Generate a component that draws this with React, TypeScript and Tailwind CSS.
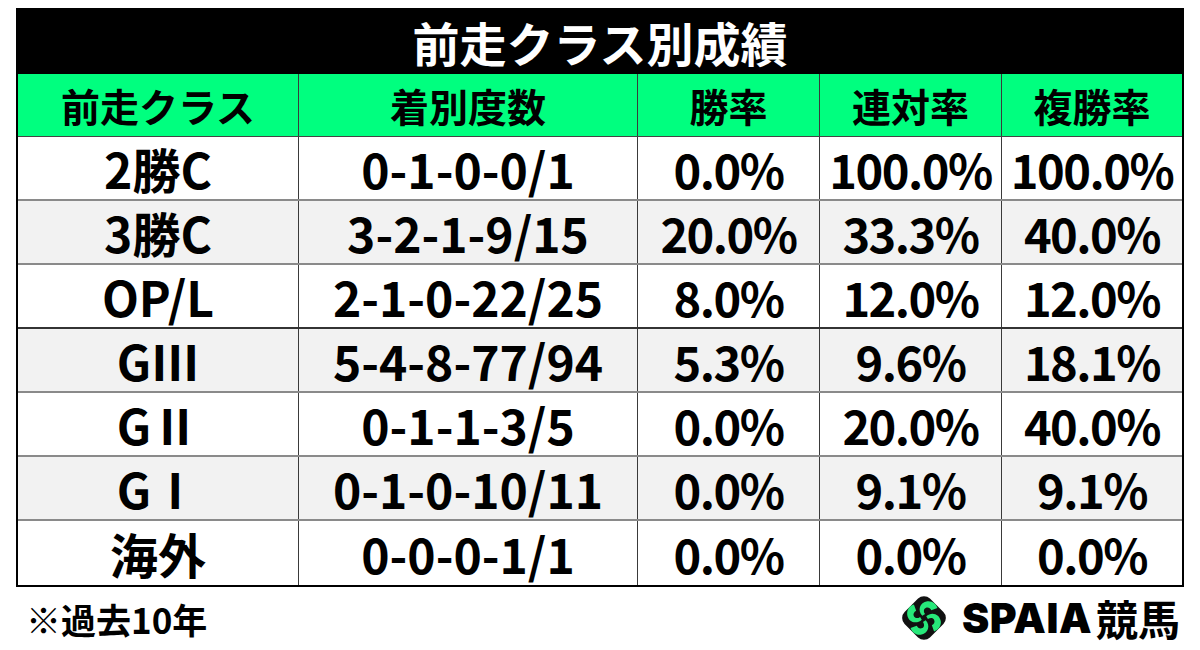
import React from 'react';

const rows = [
  { cls: '2勝C', rec: '0-1-0-0/1', win: '0.0%', ren: '100.0%', fuku: '100.0%' },
  { cls: '3勝C', rec: '3-2-1-9/15', win: '20.0%', ren: '33.3%', fuku: '40.0%' },
  { cls: 'OP/L', rec: '2-1-0-22/25', win: '8.0%', ren: '12.0%', fuku: '12.0%' },
  { cls: 'GⅢ', rec: '5-4-8-77/94', win: '5.3%', ren: '9.6%', fuku: '18.1%' },
  { cls: 'GⅡ', rec: '0-1-1-3/5', win: '0.0%', ren: '20.0%', fuku: '40.0%' },
  { cls: 'GⅠ', rec: '0-1-0-10/11', win: '0.0%', ren: '9.1%', fuku: '9.1%' },
  { cls: '海外', rec: '0-0-0-1/1', win: '0.0%', ren: '0.0%', fuku: '0.0%' },
];

const headers = ['前走クラス', '着別度数', '勝率', '連対率', '複勝率'];

const SpaiaIcon = () => (
  <svg width="56" height="56" viewBox="0 0 100 100">
    <rect x="18" y="18" width="64" height="64" rx="15" fill="#111" transform="rotate(45 50 50)" />
    {[0, 90, 180, 270].map((r) => (
      <path
        key={r}
        d="M47 46 C38 37 42 22 56 20 C65 19 72 25 74 32 L63 36 C61 32 57 30 53 32 C49 34 49 39 52 43 Z"
        fill="#27e87a"
        transform={`rotate(${r} 50 50)`}
      />
    ))}
  </svg>
);

export default function App() {
  return (
    <div className="w-[1200px] h-[650px] bg-white pt-[8px] font-['Noto_Sans_CJK_JP','Noto_Sans',sans-serif] text-black">
      <div className="ml-[16px] w-[1168px] border-x-2 border-b-2 border-black">
        <div className="h-[66px] bg-black text-white flex items-center justify-center text-[47px] font-bold leading-none">
          前走クラス別成績
        </div>
        <div className="grid grid-cols-[281px_339px_182px_182px_180px] h-[63px] bg-[#00ff7f] border-b border-[#444]">
          {headers.map((h, i) => (
            <div
              key={h}
              className={`flex items-center justify-center text-[39px] font-bold leading-none ${i < 4 ? 'border-r border-[#3a3a3a]' : ''}`}
            >
              {h}
            </div>
          ))}
        </div>
        {rows.map((row, ri) => {
          const cells = [row.cls, row.rec, row.win, row.ren, row.fuku];
          const bg = ri % 2 === 1 ? 'bg-[#f2f2f2]' : 'bg-white';
          const border =
            ri === 6 ? '' : ri === 2 ? 'border-b-2 border-[#333]' : 'border-b-2 border-[#8a8a8a]';
          return (
            <div
              key={row.cls}
              className={`grid grid-cols-[281px_339px_182px_182px_180px] h-[64px] ${bg} ${border}`}
            >
              {cells.map((c, i) => (
                <div
                  key={i}
                  className={`flex items-center justify-center font-bold leading-none whitespace-nowrap ${i >= 2 ? 'text-[47px] tracking-[-1.5px]' : 'text-[48px]'} ${i < 4 ? 'border-r border-[#3a3a3a]' : ''}`}
                >
                  {c}
                </div>
              ))}
            </div>
          );
        })}
      </div>
      <div className="flex items-center justify-between pl-[26px] pr-[20px] pt-[3px]">
        <div className="text-[35px] font-bold leading-none">※過去10年</div>
        <div className="flex items-center gap-[10px]">
          <SpaiaIcon />
          <span className="font-['Inter','Liberation_Sans',sans-serif] font-black text-[41px] leading-none tracking-[0.5px]">
            SPAIA
          </span>
          <span className="font-bold text-[42px] leading-none -ml-[6px]">競馬</span>
        </div>
      </div>
    </div>
  );
}
